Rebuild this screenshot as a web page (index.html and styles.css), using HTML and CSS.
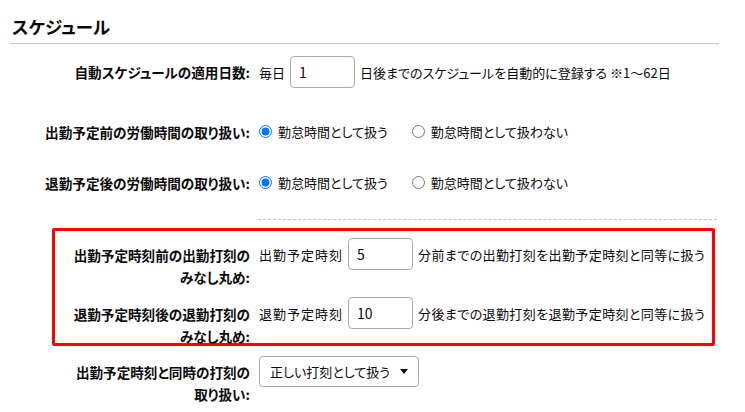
FILE: index.html
```html
<!DOCTYPE html>
<html lang="ja">
    <head>
        <meta charset="UTF-8" />
        <meta name="viewport" content="width=device-width, initial-scale=1.0" />
        <title>スケジュール設定</title>
        <link rel="stylesheet" href="styles.css">
    </head>
    <body>
        <div class="page">
            <h2 class="section-title">スケジュール</h2>

            <div class="row row-days">
                <div class="label">自動スケジュールの適用日数:</div>
                <div class="value">
                    <span>毎日</span>
                    <input type="text" class="num-input" value="1" />
                    <span>日後までのスケジュールを自動的に登録する ※1〜62日</span>
                </div>
            </div>

            <div class="row row-before">
                <div class="label">出勤予定前の労働時間の取り扱い:</div>
                <div class="value radios">
                    <label class="radio"><input type="radio" name="before" checked />勤怠時間として扱う</label>
                    <label class="radio"><input type="radio" name="before" />勤怠時間として扱わない</label>
                </div>
            </div>

            <div class="row row-after">
                <div class="label">退勤予定後の労働時間の取り扱い:</div>
                <div class="value radios">
                    <label class="radio"><input type="radio" name="after" checked />勤怠時間として扱う</label>
                    <label class="radio"><input type="radio" name="after" />勤怠時間として扱わない</label>
                </div>
            </div>

            <div class="divider"></div>

            <!-- rounding settings -->
            <div class="highlight">
                <div class="row">
                    <div class="label">出勤予定時刻前の出勤打刻の<br />みなし丸め:</div>
                    <div class="value">
                        <span class="prefix">出勤予定時刻</span>
                        <input type="text" class="num-input" value="5" />
                        <span class="suffix">分前までの出勤打刻を出勤予定時刻と同等に扱う</span>
                    </div>
                </div>
                <div class="row row-second">
                    <div class="label">退勤予定時刻後の退勤打刻の<br />みなし丸め:</div>
                    <div class="value">
                        <span class="prefix">退勤予定時刻</span>
                        <input type="text" class="num-input" value="10" />
                        <span class="suffix">分後までの退勤打刻を退勤予定時刻と同等に扱う</span>
                    </div>
                </div>
            </div>

            <div class="row row-same">
                <div class="label">出勤予定時刻と同時の打刻の<br />取り扱い:</div>
                <div class="value">
                    <div class="select-box">
                        <select>
                            <option>正しい打刻として扱う</option>
                            <option>打刻なしとして扱う</option>
                        </select>
                        <svg class="caret" width="8" height="5" viewBox="0 0 8 5">
                            <path d="M0 0 H8 L4 5 Z" fill="#111" />
                        </svg>
                    </div>
                </div>
            </div>
        </div>
    </body>
</html>
```

FILE: styles.css
```css
body {
    margin: 0;
    font-family: "Noto Sans CJK JP", "Noto Sans", sans-serif;
    font-size: 13px;
    font-feature-settings: "palt";
    color: #0a0a0a;
    background-color: #fff;
}

.page {
    padding: 0 26px 0 10px;
}

.section-title {
    margin: 0;
    padding: 14px 0 3px 2px;
    font-size: 17.5px;
    line-height: 26px;
    font-weight: bold;
    border-bottom: 1px solid #c4c4c4;
}

.row {
    display: flex;
    align-items: flex-start;
}

.label {
    width: 240px;
    flex-shrink: 0;
    padding-top: 5px;
    font-size: 13.6px;
    line-height: 22px;
    font-weight: bold;
    text-align: right;
}

.value {
    display: flex;
    align-items: center;
    min-height: 31px;
    margin-left: 9px;
    white-space: nowrap;
}

.row-days {
    margin-top: 12px;
}

.row-before {
    margin-top: 28px;
}

.row-after {
    margin-top: 20px;
}

.num-input {
    box-sizing: border-box;
    width: 65px;
    height: 32px;
    margin: 0 5px;
    padding: 0 8px;
    font: inherit;
    font-size: 14px;
    color: #0a0a0a;
    border: 1px solid #aaa;
    border-radius: 4px;
}

.prefix {
    letter-spacing: 1px;
}

.suffix {
    letter-spacing: 0.4px;
}

.radios {
    gap: 24px;
}

.radio {
    display: flex;
    align-items: center;
}

.radio input {
    width: 13px;
    height: 13px;
    margin: 0 6px 0 0;
}

.divider {
    margin: 21px 2px 0 248px;
    border-top: 1px dashed #c8c8c8;
}

.highlight {
    margin: 8px 4px 0 42px;
    padding-top: 7px;
    border: 3px solid #f00;
    border-radius: 2px;
}

.highlight .label {
    width: 195px;
    padding-top: 6px;
    margin-bottom: -4px;
}

.highlight .value {
    min-height: 32px;
}

.row-second {
    margin-top: 13px;
}

.row-same {
    margin-top: 10px;
}

.select-box {
    position: relative;
}

.select-box select {
    appearance: none;
    width: 160px;
    height: 31px;
    padding: 0 10px;
    font: inherit;
    color: #0a0a0a;
    background-color: #fff;
    border: 1px solid #aaa;
    border-radius: 4px;
}

.caret {
    position: absolute;
    top: 13px;
    right: 11px;
    pointer-events: none;
}
```
